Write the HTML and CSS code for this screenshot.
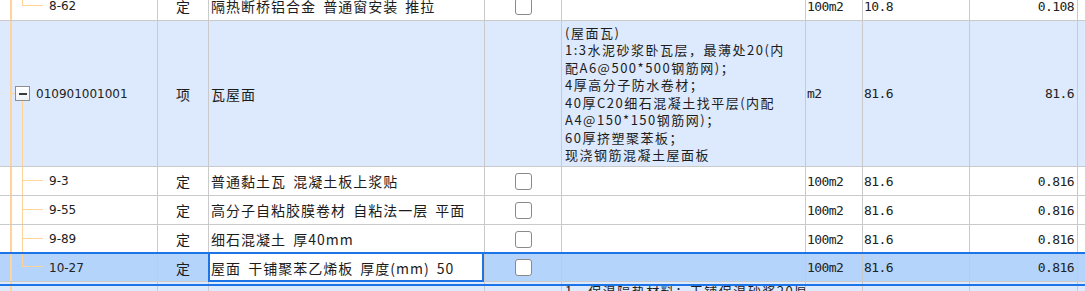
FILE: index.html
```html
<!DOCTYPE html>
<html lang="zh">
<head>
<meta charset="utf-8">
<title>清单定额</title>
<link rel="stylesheet" href="styles.css">
</head>
<body>
<div class="grid">
  <div class="row">
    <div class="cell tree last"><span class="code child-code">8-62</span></div>
    <div class="cell type">定</div>
    <div class="cell name">隔热断桥铝合金 普通窗安装 推拉</div>
    <div class="cell chk"><span class="box"></span></div>
    <div class="cell desc"></div>
    <div class="cell unit">100m2</div>
    <div class="cell num">10.8</div>
    <div class="cell qty">0.108</div>
    <div class="cell extra"></div>
  </div>

  <div class="row parent tall">
    <div class="cell tree par"><span class="exp"></span><span class="code">010901001001</span></div>
    <div class="cell type">项</div>
    <div class="cell name">瓦屋面</div>
    <div class="cell chk"></div>
    <div class="cell desc"><div class="lines">(屋面瓦)<br>1:3水泥砂浆卧瓦层，最薄处20(内<br>配A6@500*500钢筋网)；<br>4厚高分子防水卷材；<br>40厚C20细石混凝土找平层(内配<br>A4@150*150钢筋网)；<br>60厚挤塑聚苯板；<br>现浇钢筋混凝土屋面板</div></div>
    <div class="cell unit">m2</div>
    <div class="cell num">81.6</div>
    <div class="cell qty">81.6</div>
    <div class="cell extra"></div>
  </div>

  <div class="row">
    <div class="cell tree mid"><span class="code child-code">9-3</span></div>
    <div class="cell type">定</div>
    <div class="cell name">普通黏土瓦 混凝土板上浆贴</div>
    <div class="cell chk"><span class="box"></span></div>
    <div class="cell desc"></div>
    <div class="cell unit">100m2</div>
    <div class="cell num">81.6</div>
    <div class="cell qty">0.816</div>
    <div class="cell extra"></div>
  </div>

  <div class="row">
    <div class="cell tree mid"><span class="code child-code">9-55</span></div>
    <div class="cell type">定</div>
    <div class="cell name">高分子自粘胶膜卷材 自粘法一层 平面</div>
    <div class="cell chk"><span class="box"></span></div>
    <div class="cell desc"></div>
    <div class="cell unit">100m2</div>
    <div class="cell num">81.6</div>
    <div class="cell qty">0.816</div>
    <div class="cell extra"></div>
  </div>

  <div class="row">
    <div class="cell tree mid"><span class="code child-code">9-89</span></div>
    <div class="cell type">定</div>
    <div class="cell name">细石混凝土 厚40mm</div>
    <div class="cell chk"><span class="box"></span></div>
    <div class="cell desc"></div>
    <div class="cell unit">100m2</div>
    <div class="cell num">81.6</div>
    <div class="cell qty">0.816</div>
    <div class="cell extra"></div>
  </div>

  <div class="row sel">
    <div class="cell tree last sel-last"><span class="code child-code">10-27</span></div>
    <div class="cell type">定</div>
    <div class="cell name editing">屋面 干铺聚苯乙烯板 厚度(mm) 50</div>
    <div class="cell chk"><span class="box"></span></div>
    <div class="cell desc"></div>
    <div class="cell unit">100m2</div>
    <div class="cell num">81.6</div>
    <div class="cell qty">0.816</div>
    <div class="cell extra"></div>
  </div>

  <div class="row parent tall next">
    <div class="cell tree top"></div>
    <div class="cell type"></div>
    <div class="cell name"></div>
    <div class="cell chk"></div>
    <div class="cell desc top-desc"><div class="lines">1、保温隔热材料：干铺保温砂浆20厚</div></div>
    <div class="cell unit"></div>
    <div class="cell num"></div>
    <div class="cell qty"></div>
    <div class="cell extra"></div>
  </div>
</div>
</body>
</html>
```

FILE: styles.css
```css
* { box-sizing: border-box; }

html, body {
  margin: 0;
  padding: 0;
  background: #fff;
  height: 291px;
  overflow: hidden;
}

body {
  font-family: "Noto Sans CJK SC", "Liberation Sans", sans-serif;
  color: #1c1c1c;
}

.grid {
  margin-top: -8px;
  width: 1085px;
}

.row {
  display: grid;
  grid-template-columns: 158px 51px 276px 77px 244px 57px 107px 108px 1fr;
  height: 29px;
  background: #fff;
}

.row.parent { background: #dde9fc; }
.row.tall { height: 146px; }
.row.sel {
  background: #b4d4fb;
  height: 28px;
  position: relative;
}
.row.sel::after {
  content: "";
  position: absolute;
  left: 0;
  right: 0;
  top: -2px;
  height: 30px;
  border-top: 2px solid #1c74e6;
  border-bottom: 2px solid #1c74e6;
  pointer-events: none;
}

.cell {
  border-right: 1px solid #cacaca;
  border-bottom: 1px solid #cacaca;
  display: flex;
  align-items: center;
  overflow: hidden;
  white-space: nowrap;
  min-width: 0;
}
.cell.extra { border-right: none; }

/* tree column */
.tree {
  --tl: #ffd39a;
  background-image: linear-gradient(var(--tl), var(--tl));
  background-repeat: no-repeat;
  background-position: 10px 0;
  background-size: 2px 100%;
}
.tree.mid {
  background-image: linear-gradient(var(--tl), var(--tl)), linear-gradient(var(--tl), var(--tl)), linear-gradient(var(--tl), var(--tl));
  background-position: 10px 0, 22px 0, 22px 13px;
  background-size: 2px 100%, 1px 100%, 21px 1px;
}
.tree.last {
  background-image: linear-gradient(var(--tl), var(--tl)), linear-gradient(var(--tl), var(--tl)), linear-gradient(var(--tl), var(--tl));
  background-position: 10px 0, 22px 0, 22px 13px;
  background-size: 2px 100%, 1px 14px, 21px 1px;
}
.tree.sel-last {
  background-position: 10px 0, 22px 0, 22px 12px;
  background-size: 2px 100%, 1px 13px, 21px 1px;
}
.tree.par {
  padding-left: 15px;
  background-image: linear-gradient(var(--tl), var(--tl)), linear-gradient(var(--tl), var(--tl)), linear-gradient(var(--tl), var(--tl));
  background-position: 10px 0, 11px 72px, 22px 80px;
  background-size: 2px 100%, 5px 1px, 1px 100%;
}

.exp {
  width: 15px;
  height: 15px;
  border: 1px solid #8f8f8f;
  background: linear-gradient(#ffffff, #eef2f7);
  display: flex;
  align-items: center;
  justify-content: center;
  margin-right: 6px;
  flex: none;
}
.exp::before {
  content: "";
  width: 8px;
  height: 2px;
  background: #3a3a3a;
}

.code {
  font-family: "DejaVu Sans", sans-serif;
  font-size: 12px;
  color: #222;
}
.child-code { padding-left: 49px; }

.type {
  justify-content: center;
  font-size: 14px;
}

.name {
  padding-left: 2px;
  font-size: 14px;
  letter-spacing: 1px;
  word-spacing: 3px;
}
.name.editing {
  background: #fff;
  position: relative;
  overflow: visible;
}
.name.editing::before {
  content: "";
  position: absolute;
  left: -1px;
  right: 0;
  top: -2px;
  bottom: -1px;
  border: 2px solid #1c74e6;
  pointer-events: none;
}

.chk { justify-content: center; }
.box {
  width: 17px;
  height: 17px;
  border: 1px solid #8a8a8a;
  border-radius: 3px;
  background: #fff;
}

.desc {
  padding-left: 3px;
  font-size: 13px;
  letter-spacing: 1.5px;
  line-height: 17.5px;
}
.desc.top-desc { align-items: flex-start; }

.unit, .num, .qty {
  font-family: "DejaVu Sans Mono", monospace;
  font-size: 13px;
  letter-spacing: -0.6px;
  color: #222;
}
.unit { padding-left: 1px; }
.num { padding-left: 1px; }
.qty {
  justify-content: flex-end;
  padding-right: 3px;
}
```
